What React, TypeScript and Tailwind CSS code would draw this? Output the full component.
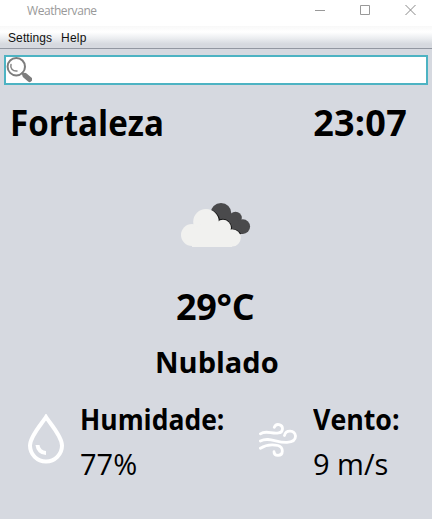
function SearchIcon() {
  return (
    <svg width="26" height="26" viewBox="0 0 26 26" fill="none">
      <path d="M19 18.500 23.700 22.500" stroke="#7d7d7d" strokeWidth="5" strokeLinecap="round" />
      <path d="M15.500 15.500 18 18" stroke="#7d7d7d" strokeWidth="2.400" />
      <circle cx="10.300" cy="9.700" r="8.700" stroke="#7d7d7d" strokeWidth="2" />
      <path d="M5 7.500C4 11 6.500 14.400 11 14" stroke="#858585" strokeWidth="1.500" strokeLinecap="round" />
    </svg>
  );
}

function CloudsIcon() {
  return (
    <svg width="70" height="44" viewBox="0 0 70 44">
      <g fill="#4a4a4c">
        <circle cx="40" cy="10.4" r="10.4" />
        <circle cx="54.5" cy="15" r="6.3" />
        <circle cx="61.8" cy="23.6" r="7.3" />
        <path d="M35 12h20l7 18.9H45z" />
      </g>
      <path
        d="M30.800 6.800C35 9 38.200 12.500 38.800 16.200C43.500 14.300 49.700 17.500 50.900 24V25.900C55.200 25.800 58.500 28 60 31L50 34L28 20Z"
        fill="#161616"
      />
      <g fill="#f1f1ef">
        <circle cx="11" cy="32" r="11" />
        <circle cx="25" cy="18.8" r="12.8" />
        <circle cx="42" cy="24.8" r="8" />
        <circle cx="51.2" cy="34.8" r="8.6" />
        <path d="M11 25 25 20h17l9 10v14H11z" />
      </g>
    </svg>
  );
}

function DropIcon() {
  return (
    <svg width="36" height="50" viewBox="0 0 36 50" fill="none" stroke="#fff">
      <path d="M18 3C14 9.500 2 22 2 31.500a16 16 0 0 0 32 0C34 22 22 9.500 18 3Z" strokeWidth="4" />
      <path d="M9.500 31a8.500 8.500 0 0 0 8.500 8" strokeWidth="4" />
    </svg>
  );
}

function WindIcon() {
  return (
    <svg width="38" height="34" viewBox="0 0 38 34" fill="none" stroke="#fff" strokeWidth="2.800" strokeLinecap="round">
      <path d="M1.400 10.800C7 6.800 13 11.300 19.500 9.900A4.200 4.200 0 1 0 15.300 4.300" />
      <path d="M1.400 18C10 13.500 18 20 28 19.300C34 19 36.600 16.500 36.500 13A5.600 5.600 0 0 0 25.500 12.500" />
      <path d="M1.400 25.200C8 21 14 21.500 19 22.500C25 24.500 24.500 32.300 19 32.300C16.500 32.300 15 30.700 15 28.700" />
    </svg>
  );
}

export default function App() {
  return (
    <div className="flex h-[519px] w-[432px] flex-col overflow-hidden bg-[#d6d9e0] font-['Open_Sans',sans-serif] text-black">
      <header className="flex h-[26px] items-start justify-between bg-white pl-[27px] pr-[16px]">
        <span className="pt-[3px] text-[12px] leading-4 tracking-[-0.45px] text-[#999]">Weathervane</span>
        <div className="flex gap-[35px] pt-[5px]">
          <svg width="10" height="10" viewBox="0 0 10 10" stroke="#999"><path d="M0 5.500h10" /></svg>
          <svg width="10" height="10" viewBox="0 0 10 10" stroke="#999" fill="none"><path d="M.5.5h9v9h-9z" /></svg>
          <svg width="11" height="10" viewBox="0 0 11 10" stroke="#888"><path d="m.5 0 10 10m0-10-10 10" /></svg>
        </div>
      </header>
      <nav className="flex h-[23px] gap-[9px] border-b border-[#9297a1] bg-[linear-gradient(#f8f8f8_0px,#fff_6px,#eceef1_12px,#d6d9df_18px,#d6d9df_22px)] pl-[8px] pt-[4px] font-['Liberation_Sans',sans-serif] text-[12px] leading-4 text-[#111]">
        <span className="w-[44px] whitespace-nowrap tracking-[0.1px]">Settings</span>
        <span className="tracking-[0.25px]">Help</span>
      </nav>
      <div className="mx-1 mt-[6px] h-[30px] shrink-0 border-2 border-[#4db3c3] bg-white">
        <SearchIcon />
      </div>
      <main className="flex flex-col">
        <div className="mt-[18px] flex h-10 justify-between pl-[10px] pr-[25px] text-[36px] font-bold leading-10">
          <h1 className="origin-left scale-x-[0.92] whitespace-nowrap">Fortaleza</h1>
          <time className="whitespace-nowrap tracking-[0.25px]">23:07</time>
        </div>
        <div className="mt-[60px] flex h-[44px] pl-[181px]">
          <CloudsIcon />
        </div>
        <p className="mt-[40px] h-10 pl-[176px] text-[36px] font-bold leading-10 tracking-[-0.3px]">29°C</p>
        <p className="mt-[15px] h-10 pl-[155px] text-[29px] font-bold leading-10">Nublado</p>
        <div className="mt-[17px] flex">
          <div className="w-[80px] pl-[28px] pt-[15px]"><DropIcon /></div>
          <div className="w-[179px] whitespace-nowrap text-[28px] leading-10">
            <p className="origin-left scale-x-[0.945] font-bold">Humidade:</p>
            <p className="mt-[5px] text-[29px]">77%</p>
          </div>
          <div className="w-[54px] pt-[24px]"><WindIcon /></div>
          <div className="whitespace-nowrap text-[28px] leading-10">
            <p className="origin-left scale-x-[0.955] font-bold">Vento:</p>
            <p className="mt-[5px] text-[29px]">9 m/s</p>
          </div>
        </div>
      </main>
    </div>
  );
}
